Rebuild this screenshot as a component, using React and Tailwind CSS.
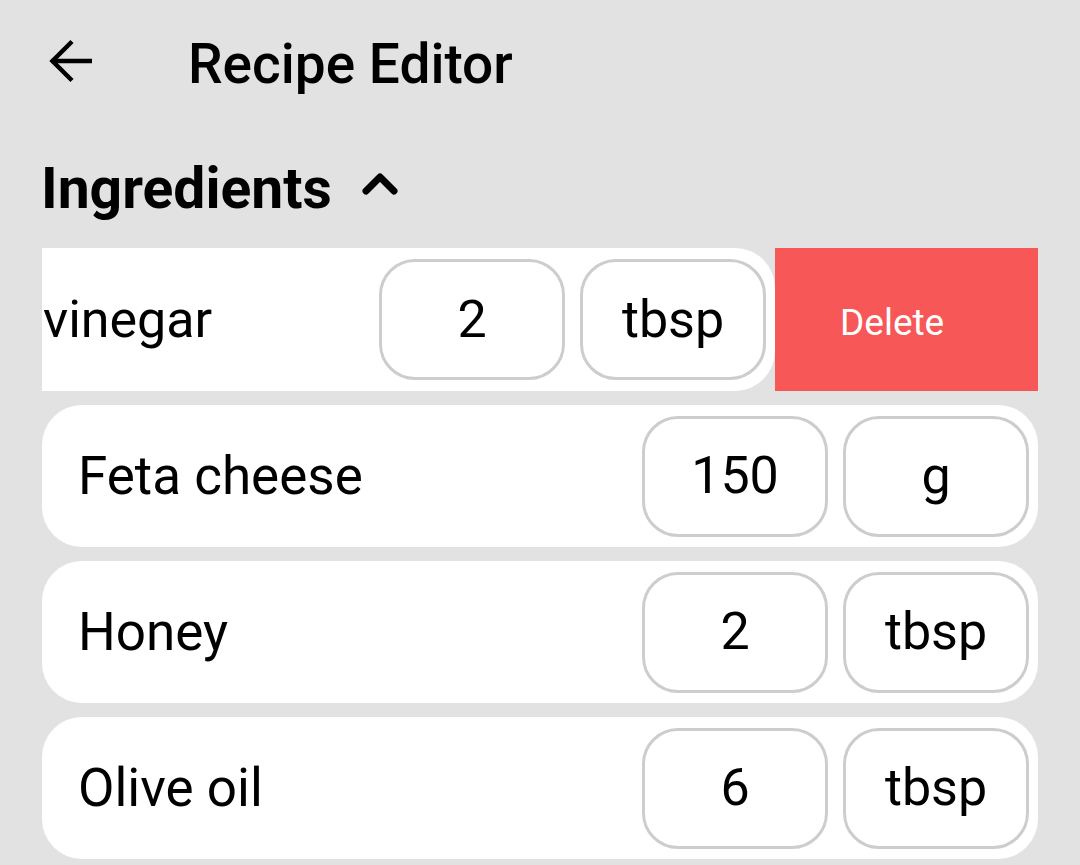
import React from "react";

function Pill({ children }) {
  return (
    <div className="w-[186px] h-[121px] shrink-0 rounded-[36px] border-[3px] border-[#cdcdcd] bg-white flex items-center justify-center text-[52px] leading-none text-black">
      {children}
    </div>
  );
}

function Row({ name, qty, unit }) {
  return (
    <div className="h-[142px] w-[996px] rounded-[40px] bg-white flex items-center pl-[36px] pr-[9px]">
      <div className="flex-1 text-[53px] leading-none text-black">{name}</div>
      <div className="flex gap-[15px]">
        <Pill>{qty}</Pill>
        <Pill>{unit}</Pill>
      </div>
    </div>
  );
}

export default function App() {
  return (
    <div className="w-[1080px] h-[865px] overflow-hidden bg-[#e2e2e2] font-['Roboto','Liberation_Sans',sans-serif] text-black">
      {/* Header */}
      <div className="h-[120px] flex items-start">
        <svg className="ml-[46px] mt-[37px] shrink-0" width="48" height="48" viewBox="0 0 48 48" fill="none" stroke="#000" strokeWidth="4.5">
          <path d="M5.5 24H46" />
          <path d="M26 4.5L6.5 24L26 43.5" />
        </svg>
        <div className="ml-[94px] mt-[37px] text-[55px] leading-none font-medium">Recipe Editor</div>
      </div>

      {/* Section title */}
      <div className="h-[128px] flex items-start">
        <div className="ml-[41px] mt-[40px] text-[57px] leading-none font-bold">Ingredients</div>
        <svg className="ml-[28px] mt-[50px] shrink-0" width="40" height="28" viewBox="0 0 40 28" fill="none" stroke="#000" strokeWidth="7" strokeLinecap="round" strokeLinejoin="round">
          <path d="M6 21L20 7L34 21" />
        </svg>
      </div>

      {/* List */}
      <div className="px-[42px] flex flex-col gap-[14px]">
        <div className="h-[143px] w-[996px] flex">
          <div className="w-[733px] shrink-0 h-full bg-white rounded-r-[40px] flex items-center pl-[1px] pr-[9px]">
            <div className="flex-1 text-[52px] leading-none">vinegar</div>
            <div className="flex gap-[15px]">
              <Pill>2</Pill>
              <Pill>tbsp</Pill>
            </div>
          </div>
          <div className="w-[263px] shrink-0 h-full bg-[#f75757] flex items-center pl-[65px] pt-[6px]">
            <span className="text-white text-[37px] leading-none">Delete</span>
          </div>
        </div>
        <Row name="Feta cheese" qty="150" unit="g" />
        <Row name="Honey" qty="2" unit="tbsp" />
        <Row name="Olive oil" qty="6" unit="tbsp" />
      </div>
    </div>
  );
}
